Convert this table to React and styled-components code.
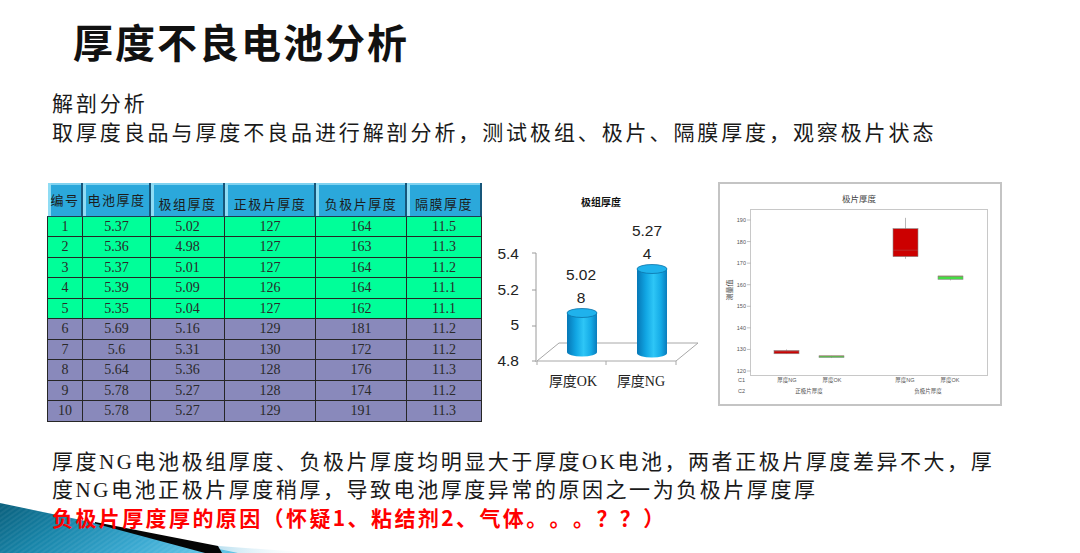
import React from "react";
import styled, { createGlobalStyle } from "styled-components";

const Global = createGlobalStyle`
  html, body { margin: 0; padding: 0; background: #ffffff; }
  body {
    font-family: "Noto Sans CJK SC", "Liberation Sans", sans-serif;
    text-spacing-trim: space-all;
  }
`;

const Page = styled.div`
  position: relative;
  width: 1080px;
  height: 553px;
  overflow: hidden;
  background: #ffffff;
  display: flex;
  flex-direction: column;
`;

const Title = styled.h1`
  margin: 20px 0 0 73px;
  font-family: "Noto Sans CJK SC", sans-serif;
  font-size: 40px;
  line-height: 42px;
  font-weight: 700;
  letter-spacing: 2px;
  color: #111;
  position: relative;
  z-index: 1;
`;

const Intro = styled.div`
  margin: 26px 0 0 52px;
  font-family: "Noto Sans CJK SC", sans-serif;
  font-size: 21px;
  line-height: 29px;
  letter-spacing: 2.9px;
  color: #1a1a1a;
  white-space: nowrap;
`;

const Middle = styled.div`
  margin-top: 36px;
  padding-left: 47px;
  display: flex;
  align-items: flex-start;
  height: 238px;
  flex: none;
`;

const Table = styled.table`
  margin-top: 1px;
  border-collapse: collapse;
  table-layout: fixed;
  width: 434px;
`;

const HeadCell = styled.th`
  height: 33px;
  box-sizing: border-box;
  padding: 0 0 ${(p) => (p.$mid ? 0 : 3)}px 0;
  background: #2ba8db;
  box-shadow: inset 3px 0 0 #8fdcf4, inset -2px 0 0 #17567a, inset 0 2px 0 #7fd2f0;
  vertical-align: ${(p) => (p.$mid ? "middle" : "bottom")};
  font-family: "Noto Sans CJK SC", sans-serif;
  font-weight: 400;
  font-size: 13px;
  letter-spacing: 1.5px;
  color: #1c1c1c;
  white-space: nowrap;
  overflow: hidden;
  border-bottom: 1px solid #1e3c50;
`;

const Row = styled.tr`
  background: ${(p) => (p.$ok ? "#00ff99" : "#8989bb")};
`;

const Cell = styled.td`
  height: 19.5px;
  padding: 0;
  border: 1px solid #262626;
  text-align: center;
  vertical-align: middle;
  font-family: "Liberation Serif", serif;
  font-size: 14px;
  line-height: 17px;
  color: #2a2a2a;
`;

const BarSvg = styled.svg`
  display: block;
  margin-left: 5px;
  flex: none;
`;

const BoxFrame = styled.div`
  margin-left: 9px;
  width: 284px;
  height: 224px;
  box-sizing: border-box;
  border: 2px solid #c4c4c4;
  background: #fff;
  flex: none;
`;

const BoxSvg = styled.svg`
  display: block;
`;

const Conclusion = styled.div`
  margin: 29px 0 0 52px;
  font-size: 21px;
  line-height: 27.5px;
  color: #1a1a1a;
  white-space: nowrap;
  position: relative;
  z-index: 1;
`;

const Line = styled.div`
  color: ${(p) => (p.$red ? "#ff0000" : "#1a1a1a")};
  font-weight: ${(p) => (p.$red ? 700 : 400)};
  letter-spacing: ${(p) => (p.$red ? "2.4px" : "2.55px")};
  font-family: ${(p) =>
    p.$red ? '"Noto Sans CJK SC", sans-serif' : '"Liberation Serif", "Noto Sans CJK SC", serif'};
`;

const Deco = styled.svg`
  position: absolute;
  left: 0;
  bottom: 0;
  z-index: 0;
`;

const rows = [
  [1, "5.37", "5.02", 127, 164, "11.5"],
  [2, "5.36", "4.98", 127, 163, "11.3"],
  [3, "5.37", "5.01", 127, 164, "11.2"],
  [4, "5.39", "5.09", 126, 164, "11.1"],
  [5, "5.35", "5.04", 127, 162, "11.1"],
  [6, "5.69", "5.16", 129, 181, "11.2"],
  [7, "5.6", "5.31", 130, 172, "11.2"],
  [8, "5.64", "5.36", 128, 176, "11.3"],
  [9, "5.78", "5.27", 128, 174, "11.2"],
  [10, "5.78", "5.27", 129, 191, "11.3"],
];

const heads = [
  { t: "编号", w: 35, mid: true },
  { t: "电池厚度", w: 68, mid: true },
  { t: "极组厚度", w: 74 },
  { t: "正极片厚度", w: 91 },
  { t: "负极片厚度", w: 91 },
  { t: "隔膜厚度", w: 75 },
];

function Cylinder({ x, w, top, bottom, id }) {
  const rx = w / 2;
  const ry = 4.5;
  const cx = x + rx;
  return (
    <g>
      <path
        d={`M${x},${top} L${x},${bottom} A${rx},${ry} 0 0 0 ${x + w},${bottom} L${x + w},${top} Z`}
        fill={`url(#${id})`}
      />
      <ellipse cx={cx} cy={top} rx={rx} ry={ry} fill="#1fb2ec" stroke="#0b74aa" strokeWidth="0.8" />
    </g>
  );
}

function BarChart() {
  const sans = '"Liberation Sans", sans-serif';
  return (
    <BarSvg width="222" height="215" viewBox="0 0 222 215">
      <defs>
        <linearGradient id="cyl" x1="0" x2="1" y1="0" y2="0">
          <stop offset="0" stopColor="#0677b6" />
          <stop offset="0.3" stopColor="#11a6e4" />
          <stop offset="0.55" stopColor="#2ec6f6" />
          <stop offset="0.8" stopColor="#14aae6" />
          <stop offset="1" stopColor="#0a7cbc" />
        </linearGradient>
      </defs>
      <g transform="translate(-486,-182)">
        <text x="600" y="206" textAnchor="middle" fontSize="10" fontWeight="700" fill="#111"
          fontFamily='"Noto Sans CJK SC", sans-serif'>极组厚度</text>
        {[["5.4", 259], ["5.2", 295], ["5", 330], ["4.8", 366]].map(([t, y]) => (
          <text key={t} x="518" y={y} textAnchor="end" fontSize="15.5" fill="#222" fontFamily={sans}>{t}</text>
        ))}
        <line x1="535" y1="253" x2="535" y2="362" stroke="#9a9a9a" strokeWidth="1" />
        {[253, 290, 326, 361].map((y) => (
          <line key={y} x1="531" y1={y} x2="535" y2={y} stroke="#9a9a9a" strokeWidth="1" />
        ))}
        <path d="M536,361 L558,343 L697,343 L675,361 Z" fill="#fff" stroke="#a8a8a8" strokeWidth="1" />
        <line x1="605" y1="361" x2="605" y2="365" stroke="#a8a8a8" />
        <line x1="675" y1="361" x2="675" y2="365" stroke="#a8a8a8" />
        <line x1="536" y1="361" x2="536" y2="365" stroke="#a8a8a8" />
        <Cylinder x={566} w={30} top={313} bottom={352} id="cyl" />
        <Cylinder x={636} w={30} top={269} bottom={353} id="cyl" />
        <text x="580" y="280" textAnchor="middle" fontSize="15.5" fill="#222" fontFamily={sans}>5.02</text>
        <text x="580" y="303" textAnchor="middle" fontSize="15.5" fill="#222" fontFamily={sans}>8</text>
        <text x="646" y="236" textAnchor="middle" fontSize="15.5" fill="#222" fontFamily={sans}>5.27</text>
        <text x="646" y="259" textAnchor="middle" fontSize="15.5" fill="#222" fontFamily={sans}>4</text>
        <text x="572" y="386" textAnchor="middle" fontSize="14" fill="#222"
          fontFamily='"Liberation Serif", "Noto Sans CJK SC", serif'>厚度OK</text>
        <text x="640" y="386" textAnchor="middle" fontSize="14" fill="#222"
          fontFamily='"Liberation Serif", "Noto Sans CJK SC", serif'>厚度NG</text>
      </g>
    </BarSvg>
  );
}

const yOf = (v) => 220 + (190 - v) * (151 / 70);

function BoxPlot() {
  const f = '"Liberation Sans", "Noto Sans CJK SC", sans-serif';
  const ticks = [190, 180, 170, 160, 150, 140, 130, 120];
  const boxes = [
    { x: 773, q1: 128, q3: 129.5, med: 129, lo: 128, hi: 130, c: "#cc0000" },
    { x: 818, q1: 126.5, q3: 127, med: 127, lo: 126, hi: 127, c: "#44dd44" },
    { x: 892, q1: 173, q3: 186, med: 176, lo: 172, hi: 191, c: "#cc0000" },
    { x: 937, q1: 162.5, q3: 164, med: 164, lo: 162, hi: 164, c: "#44dd44" },
  ];
  return (
    <BoxSvg width="280" height="220" viewBox="0 0 280 220">
      <g transform="translate(-719,-184)">
        <text x="858" y="202" textAnchor="middle" fontSize="8.5" fill="#444" fontFamily={f}>极片厚度</text>
        <rect x="749.5" y="209.5" width="237" height="166" fill="#fff" stroke="#c8c8c8" strokeWidth="1" />
        {ticks.map((t) => (
          <g key={t}>
            <line x1="746" y1={yOf(t)} x2="749.5" y2={yOf(t)} stroke="#999" strokeWidth="0.6" />
            <text x="745" y={yOf(t) + 2} textAnchor="end" fontSize="5.5" fill="#555" fontFamily={f}>{t}</text>
          </g>
        ))}
        <text transform="translate(731,290) rotate(-90)" textAnchor="middle" fontSize="7" fill="#444"
          fontFamily={f}>测量值</text>
        {boxes.map((b, i) => {
          const cx = b.x + 12.5;
          return (
            <g key={i}>
              <line x1={cx} y1={yOf(b.hi)} x2={cx} y2={yOf(b.lo)} stroke="#999" strokeWidth="0.7" />
              <rect x={b.x} y={yOf(b.q3)} width="25" height={Math.max(yOf(b.q1) - yOf(b.q3), 1.6)}
                fill={b.c} stroke="#8a8a8a" strokeWidth="0.6" />
              <line x1={b.x} y1={yOf(b.med)} x2={b.x + 25} y2={yOf(b.med)} stroke="#aa5555" strokeWidth="0.5" />
            </g>
          );
        })}
        <text x="737" y="382" fontSize="5.5" fill="#555" fontFamily={f}>C1</text>
        <text x="737" y="393" fontSize="5.5" fill="#555" fontFamily={f}>C2</text>
        {[["厚度NG", 786], ["厚度OK", 831], ["厚度NG", 904], ["厚度OK", 949]].map(([t, x], i) => (
          <text key={i} x={x} y="382" textAnchor="middle" fontSize="5.5" fill="#555" fontFamily={f}>{t}</text>
        ))}
        <text x="808" y="393" textAnchor="middle" fontSize="5.5" fill="#555" fontFamily={f}>正极片厚度</text>
        <text x="927" y="393" textAnchor="middle" fontSize="5.5" fill="#555" fontFamily={f}>负极片厚度</text>
      </g>
    </BoxSvg>
  );
}

function Decoration() {
  return (
    <Deco width="320" height="52" viewBox="0 0 320 52">
      <defs>
        <linearGradient id="teal" x1="0" x2="1" y1="0" y2="0.3">
          <stop offset="0" stopColor="#0a5f7c" />
          <stop offset="0.35" stopColor="#1784a8" />
          <stop offset="0.75" stopColor="#39a8d0" />
          <stop offset="1" stopColor="#5cc0e2" />
        </linearGradient>
        <linearGradient id="pale" x1="0" x2="1" y1="0" y2="0">
          <stop offset="0" stopColor="#a9d8ec" />
          <stop offset="1" stopColor="#ffffff" stopOpacity="0" />
        </linearGradient>
        <pattern id="stripes" width="4" height="4" patternUnits="userSpaceOnUse" patternTransform="rotate(-35)">
          <rect width="4" height="2" fill="#ffffff" fillOpacity="0.06" />
        </pattern>
      </defs>
      <g transform="translate(0,-501)">
        <polygon points="205,545 315,553 205,553" fill="url(#pale)" />
        <polygon points="0,503 238,553 0,553" fill="url(#teal)" />
        <polygon points="0,503 238,553 0,553" fill="url(#stripes)" />
        <polygon points="95,522 218,546 222,553 205,553 95,523.5" fill="#050505" />
      </g>
    </Deco>
  );
}

export default function App() {
  return (
    <Page>
      <Global />
      <Title>厚度不良电池分析</Title>
      <Intro>
        <div>解剖分析</div>
        <div>取厚度良品与厚度不良品进行解剖分析，测试极组、极片、隔膜厚度，观察极片状态</div>
      </Intro>
      <Middle>
        <Table>
          <colgroup>
            {heads.map((h) => (
              <col key={h.t} style={{ width: h.w }} />
            ))}
          </colgroup>
          <thead>
            <tr>
              {heads.map((h) => (
                <HeadCell key={h.t} $mid={h.mid}>{h.t}</HeadCell>
              ))}
            </tr>
          </thead>
          <tbody>
            {rows.map((r) => (
              <Row key={r[0]} $ok={r[0] <= 5}>
                {r.map((v, i) => (
                  <Cell key={i}>{v}</Cell>
                ))}
              </Row>
            ))}
          </tbody>
        </Table>
        <BarChart />
        <BoxFrame>
          <BoxPlot />
        </BoxFrame>
      </Middle>
      <Conclusion>
        <Line>厚度NG电池极组厚度、负极片厚度均明显大于厚度OK电池，两者正极片厚度差异不大，厚</Line>
        <Line>度NG电池正极片厚度稍厚，导致电池厚度异常的原因之一为负极片厚度厚</Line>
        <Line $red>负极片厚度厚的原因（怀疑1、粘结剂2、气体。。。？？）</Line>
      </Conclusion>
      <Decoration />
    </Page>
  );
}
